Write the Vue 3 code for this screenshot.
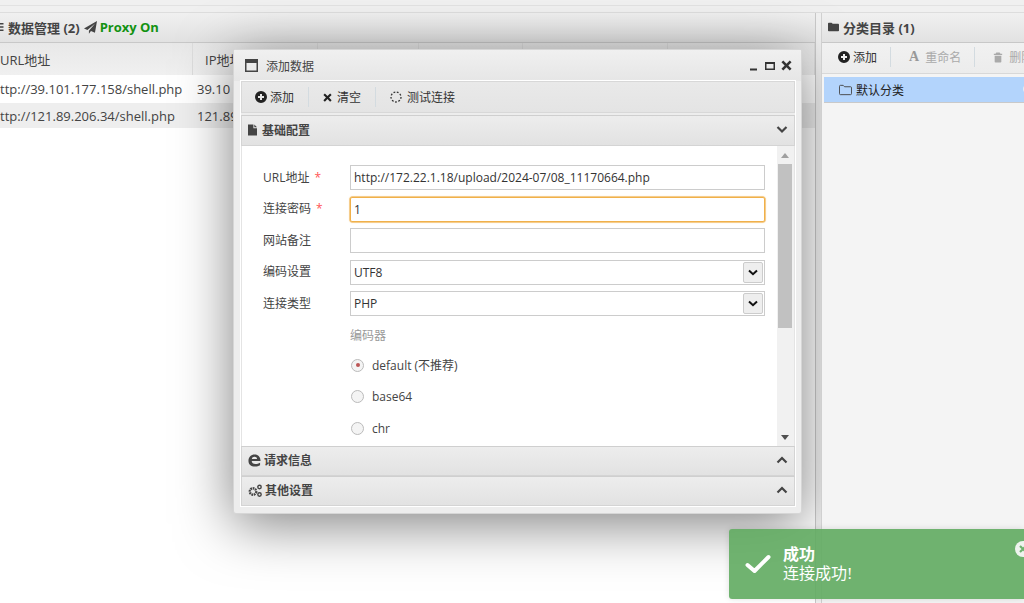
<script setup>
const columns = [
  { label: 'URL地址', w: 193 },
  { label: 'IP地址', w: 125 },
  { label: '', w: 101 },
  { label: '', w: 104 },
  { label: '', w: 145 },
  { label: '', w: 147 }
]
const rows = [
  ['ttp://39.101.177.158/shell.php', '39.10'],
  ['ttp://121.89.206.34/shell.php', '121.89']
]
const fields = [
  { label: 'URL地址', req: true, value: 'http://172.22.1.18/upload/2024-07/08_11170664.php' },
  { label: '连接密码', req: true, value: '1', focus: true },
  { label: '网站备注', value: '' }
]
const selects = [
  { label: '编码设置', value: 'UTF8' },
  { label: '连接类型', value: 'PHP' }
]
const radios = [
  { label: 'default (不推荐)', on: true },
  { label: 'base64' },
  { label: 'chr' }
]
</script>

<template>
  <div class="page">
    <div class="topbar"></div>
    <div class="panels">
      <section class="left">
        <header class="phead left-head">
          <svg class="dots" viewBox="0 0 4 10"><path d="M0 1h3.500v1.600H0zM0 4.200h3.500v1.600H0zM0 7.400h3.500V9H0z"/></svg>
          <span class="b">数据管理 (2)</span>
          <svg class="ic13" viewBox="0 0 14 14"><path d="M14 0 11.800 12.600 7.500 10.700 5.300 13.600V10.600L12 2.600 3.700 9.600 0 8z"/></svg>
          <span class="proxy">Proxy On</span>
        </header>
        <div class="thead">
          <div v-for="(c, i) in columns" :key="i" class="th" :style="{ width: c.w + 'px' }">{{ c.label }}</div>
        </div>
        <div v-for="(r, i) in rows" :key="i" class="tr" :class="{ alt: i === 1 }">
          <div class="td first">{{ r[0] }}</div>
          <div class="td">{{ r[1] }}</div>
        </div>
      </section>

      <aside class="right">
        <header class="phead right-head">
          <svg class="fold" viewBox="0 0 14 12"><path d="M0 1.500C0 .8.500.5 1 .5h3.500L6 2h7c.6 0 1 .4 1 1v7.500c0 .6-.4 1-1 1H1c-.6 0-1-.4-1-1z"/></svg>
          <span class="b">分类目录 (1)</span>
        </header>
        <div class="rtool">
          <span class="tbtn">
            <svg class="ic12" viewBox="0 0 12 12"><path fill-rule="evenodd" d="M6 0a6 6 0 1 1 0 12A6 6 0 0 1 6 0zM5 3v2H3v2h2v2h2V7h2V5H7V3z"/></svg>
            添加
          </span>
          <i class="sep"></i>
          <span class="tbtn off"><b class="a-ic">A</b> 重命名</span>
          <i class="sep"></i>
          <span class="tbtn off">
            <svg class="trash" viewBox="0 0 12 12"><path d="M4 0h4l1 1.500h2V3H1V1.500h2zM2 4h8v7c0 .6-.4 1-1 1H3c-.6 0-1-.4-1-1z"/></svg>
            删除
          </span>
        </div>
        <div class="cat">
          <svg class="folder" viewBox="0 0 14 12"><path fill="none" stroke="#444" stroke-width="1" d="M.5 2c0-.6.4-1 1-1h3l1.500 1.500h6.500c.6 0 1 .4 1 1v6.500c0 .6-.4 1-1 1h-11c-.6 0-1-.4-1-1z"/></svg>
          默认分类
          <i class="badge"></i>
        </div>
      </aside>
    </div>

    <div class="dialog">
      <header class="dhead">
        <svg class="winic" viewBox="0 0 13 13"><path fill-rule="evenodd" d="M0 0h13v13H0zM1.500 4v7.500h10V4z"/></svg>
        <span class="dtitle">添加数据</span>
        <span class="winbtns">
          <svg viewBox="0 0 10 10" class="wb"><path d="M1 7.500h7v2H1z"/></svg>
          <svg viewBox="0 0 10 10" class="wb"><path fill-rule="evenodd" d="M0 1h10v8H0zM1.500 3v4.500h7V3z"/></svg>
          <svg viewBox="0 0 12 12" class="wb x"><path d="M2.500.5 6 4 9.500.5l2 2L8 6l3.500 3.500-2 2L6 8l-3.500 3.500-2-2L4 6 .5 2.500z"/></svg>
        </span>
      </header>
      <div class="inner">
        <div class="dtool">
          <span class="tbtn">
            <svg class="ic12" viewBox="0 0 12 12"><path fill-rule="evenodd" d="M6 0a6 6 0 1 1 0 12A6 6 0 0 1 6 0zM5 3v2H3v2h2v2h2V7h2V5H7V3z"/></svg>
            添加
          </span>
          <i class="sep"></i>
          <span class="tbtn wide">
            <svg class="ic9" viewBox="0 0 12 12"><path d="M2.500.5 6 4 9.500.5l2 2L8 6l3.500 3.500-2 2L6 8l-3.500 3.500-2-2L4 6 .5 2.500z"/></svg>
            清空
          </span>
          <i class="sep"></i>
          <span class="tbtn wide">
            <svg class="ic12 spin" viewBox="0 0 12 12"><circle cx="6" cy="6" r="5" fill="none" stroke="#333" stroke-width="1.300" stroke-dasharray="1.800 1.600"/></svg>
            测试连接
          </span>
        </div>
        <div class="acc first-acc">
          <svg class="doc" viewBox="0 0 10 12"><path d="M0 0h6v4h4v8H0zM7 0l3 3H7zM2 6h6v1H2zM2 8h6v1H2z"/></svg>
          <span class="b">基础配置</span>
          <svg class="chev" viewBox="0 0 12 8"><path d="M1.500 1 6 5.500 10.500 1" fill="none" stroke="#444" stroke-width="2.200"/></svg>
        </div>
        <div class="body">
          <div class="form">
            <div v-for="f in fields" :key="f.label" class="row">
              <label class="lab">{{ f.label }}<em v-if="f.req">*</em></label>
              <div class="inp" :class="{ focus: f.focus }">{{ f.value }}</div>
            </div>
            <div v-for="s in selects" :key="s.label" class="row">
              <label class="lab">{{ s.label }}</label>
              <div class="inp sel">
                {{ s.value }}
                <span class="arrow">
                  <svg viewBox="0 0 10 7"><path d="M1 1.500 5 5.200 9 1.500" fill="none" stroke="#111" stroke-width="2"/></svg>
                </span>
              </div>
            </div>
            <div class="group">编码器</div>
            <div v-for="r in radios" :key="r.label" class="radio">
              <span class="dot" :class="{ on: r.on }"></span>
              {{ r.label }}
            </div>
          </div>
          <div class="scroll">
            <span class="tri up"></span>
            <span class="thumb"></span>
            <span class="tri down"></span>
          </div>
        </div>
        <div class="acc tight">
          <svg class="ic13" viewBox="0 0 14 13"><path fill-rule="evenodd" d="M7.200 0C11 0 13.500 2.600 13.500 7H4c.1 2 1.600 3.300 4 3.300 1.800 0 3.500-.6 5-1.500v2.800c-1.500.9-3.300 1.400-5.300 1.400C3 13 .5 10.500.5 6.700.5 2.800 3.200 0 7.200 0zM4.100 4.800h5.700C9.600 3.400 8.600 2.500 7 2.500c-1.500 0-2.600.9-2.900 2.300z"/></svg>
          <span class="b">请求信息</span>
          <svg class="chev" viewBox="0 0 12 8"><path d="M1.500 6.500 6 2l4.500 4.500" fill="none" stroke="#444" stroke-width="2.200"/></svg>
        </div>
        <div class="acc tight">
          <svg class="gear" viewBox="0 0 14 13"><circle cx="5" cy="7.500" r="3.200" fill="none" stroke="#444" stroke-width="2.400" stroke-dasharray="1.700 .7"/><circle cx="11.500" cy="3" r="1.700" fill="none" stroke="#444" stroke-width="1.400"/><circle cx="11.500" cy="10.500" r="1.700" fill="none" stroke="#444" stroke-width="1.400"/></svg>
          <span class="b">其他设置</span>
          <svg class="chev" viewBox="0 0 12 8"><path d="M1.500 6.500 6 2l4.500 4.500" fill="none" stroke="#444" stroke-width="2.200"/></svg>
        </div>
      </div>
    </div>

    <div class="toast">
      <svg class="check" viewBox="0 0 26 20"><path d="M2.500 11 9.500 17 23.500 3" fill="none" stroke="#fff" stroke-width="4" stroke-linecap="round" stroke-linejoin="round"/></svg>
      <div class="tmsg">
        <strong>成功</strong>
        <span>连接成功!</span>
      </div>
      <svg class="tclose" viewBox="0 0 16 16"><circle cx="8" cy="8" r="8" fill="#eef3ee"/><path d="M5 5l6 6M11 5l-6 6" stroke="#6fb26f" stroke-width="2.200"/></svg>
    </div>
  </div>
</template>

<style>
html, body { margin: 0; overflow: hidden; }
</style>

<style scoped>
.page {
  position: relative;
  width: 1024px;
  height: 603px;
  overflow: hidden;
  background: #f1f1f1;
  font: 12px "Open Sans", "Noto Sans CJK SC", sans-serif;
  color: #444;
}
.topbar { height: 13px; box-sizing: border-box; background: #f0f0f0; border-bottom: 1px solid #ddd; box-shadow: inset 0 -6px 0 #f0f0f0, inset 0 -7px 0 #e2e2e2; }
.panels { display: flex; height: 590px; gap: 5px; }
.left { width: 816px; background: #fff; border-right: 1px solid #c9c9c9; box-sizing: border-box; }
.right { flex: 1; min-width: 0; background: #f4f4f4; border-left: 1px solid #d0d0d0; position: relative; z-index: 2; }
.phead {
  height: 30px;
  display: flex;
  align-items: center;
  gap: 3px;
  box-sizing: border-box;
  padding-bottom: 1px;
  background: linear-gradient(#f0f0f0, #e2e2e2);
  border-bottom: 1px solid #c8c8c8;
  font-size: 13px;
  color: #444;
}
.right-head { padding-left: 6px; gap: 4px; }
.b { font-weight: 700; }
.proxy { color: #129212; font-weight: 700; }
svg { fill: #444; flex: none; }
.ic13 { width: 13px; height: 13px; }
.gear { width: 14px; height: 13px; }
.dots { width: 4px; height: 10px; margin-right: 1px; }
.left-head .ic13 { margin-left: 1px; }
.fold { width: 11px; height: 10px; }
.ic12 { width: 12px; height: 12px; fill: #222; }
.ic9 { width: 9px; height: 9px; fill: #222; }
.trash { width: 10px; height: 11px; }
.doc { width: 9px; height: 12px; }
.thead { display: flex; height: 32px; background: linear-gradient(#e8e8e8, #f0f0f0); }
.th { box-sizing: border-box; padding: 7px 0 0 12px; font-size: 13px; border-right: 1px solid #ddd; }
.th:first-child { padding-left: 0; }
.tr { display: flex; height: 28px; align-items: center; font-size: 13px; background: #fff; }
.tr.alt { background: #eee; height: 25px; }
.td { padding-left: 4px; }
.td.first { width: 193px; box-sizing: border-box; padding-left: 0; }
.rtool { display: flex; align-items: center; height: 31px; padding: 0 0 2px 16px; gap: 13px; background: linear-gradient(#f1f1f1, #ececec); border-bottom: 1px solid #d8d8d8; box-sizing: border-box; overflow: hidden; }
.dtool { display: flex; align-items: center; height: 32px; padding-left: 13px; gap: 14px; background: linear-gradient(#e9e9e9, #e4e4e4); border: 1px solid #d8d8d8; box-sizing: border-box; }
.tbtn { display: inline-flex; flex: none; white-space: nowrap; align-items: center; gap: 3px; font-size: 12px; color: #333; }
.tbtn.wide { gap: 5px; }
.tbtn.off { color: #aaa; gap: 6px; margin-left: 5px; }
.tbtn.off svg { fill: #aaa; }
.a-ic { font: 700 14px "Liberation Serif", serif; color: #999; }
.sep { width: 1px; height: 20px; flex: none; background: #d3dbe0; }
.cat { margin: 3px 0 0 2px; height: 26px; display: flex; align-items: center; padding-left: 15px; gap: 4px; background: #b3d4fc; border-bottom: 1px solid #c9c9c9; box-sizing: border-box; color: #222; position: relative; overflow: hidden; }
.folder { width: 13px; height: 12px; }
.badge { position: absolute; right: -11px; top: 7px; width: 12px; height: 10px; border-radius: 6px; background: #e8eef5; }

.dialog {
  position: absolute;
  z-index: 1;
  left: 233px;
  top: 49px;
  width: 569px;
  height: 465px;
  box-sizing: border-box;
  background: #ededed;
  border: 1px solid #d6d6d6;
  border-radius: 3px;
  box-shadow: 0 10px 55px rgba(0, 0, 0, .5);
  display: flex;
  flex-direction: column;
}
.dhead { height: 31px; flex: none; display: flex; align-items: center; padding: 0 9px 0 11px; gap: 8px; background: linear-gradient(#f0f0f0, #e6e6e6); }
.winic { width: 13px; height: 13px; fill: #444; }
.dtitle { font-size: 12px; font-weight: 400; color: #444; flex: 1; }
.winbtns { display: flex; align-items: center; gap: 6px; }
.wb { width: 10px; height: 10px; fill: #333; }
.wb.x { width: 11px; height: 11px; }
.inner { margin: 0 6px 0 7px; display: flex; flex-direction: column; box-shadow: 0 0 0 1px #fff; }
.acc { height: 30px; flex: none; display: flex; align-items: center; gap: 5px; padding: 0 6px 2px 6px; box-sizing: border-box; background: linear-gradient(#ededed, #e2e2e2); border: 1px solid #d4d4d4; border-top-color: #cfcfcf; color: #444; }
.acc.tight { gap: 3px; }
.acc .ic13 { fill: #444; }
.acc .doc { fill: #444; }
.acc .b { flex: 1; }
.chev { width: 12px; height: 8px; }
.first-acc { margin-top: 2px; height: 31px; }
.body { height: 300px; flex: none; display: flex; background: #fff; border: 1px solid #e4e4e4; border-width: 0 1px; box-sizing: border-box; overflow: hidden; }
.form { flex: 1; padding-top: 19px; }
.row { display: flex; align-items: center; height: 25px; margin-bottom: 6.500px; }
.lab { width: 87px; margin-left: 21px; padding-bottom: 2px; font-size: 12px; color: #444; flex: none; }
.lab em { color: #f55; font-style: normal; margin-left: 5px; }
.inp { width: 415px; height: 25px; box-sizing: border-box; border: 1px solid #ccc; padding: 0 3px; font-size: 12px; line-height: 23px; color: #333; position: relative; }
.inp.focus { border-color: #f0b04a; box-shadow: 0 0 0 .5px #f0b04a, 0 0 2px #f0b04a; border-radius: 2px; }
.sel { background: #fff; }
.arrow { position: absolute; right: 1px; top: 1px; width: 20px; height: 21px; background: #eee; border: 1px solid #ccc; border-radius: 2px; box-sizing: border-box; display: flex; align-items: center; justify-content: center; }
.arrow svg { width: 10px; height: 7px; }
.group { margin: 12px 0 0 108px; color: #999; font-size: 12px; line-height: 16px; }
.radio { margin: 0 0 0 109px; display: flex; align-items: center; gap: 8px; height: 31.500px; font-size: 12px; color: #444; position: relative; top: 5.500px; }
.dot { width: 13px; height: 13px; border-radius: 50%; border: 1px solid #bbb; box-sizing: border-box; background: #f4f4f4; display: inline-block; position: relative; }
.dot.on::after { content: ""; position: absolute; left: 3.500px; top: 3.500px; width: 4px; height: 4px; background: #b55; border-radius: 50%; }
.scroll { width: 17px; flex: none; background: #f1f1f1; display: flex; flex-direction: column; align-items: center; position: relative; }
.thumb { width: 14px; height: 164px; background: #c1c1c1; position: absolute; top: 18px; left: 1px; }
.tri { position: absolute; width: 0; height: 0; border-left: 4px solid transparent; border-right: 4px solid transparent; left: 4px; }
.tri.up { top: 7px; border-bottom: 5px solid #a0a0a0; }
.tri.down { bottom: 6px; border-top: 5px solid #505050; }

.toast {
  position: absolute;
  z-index: 3;
  left: 729px;
  top: 529px;
  width: 295px;
  height: 70px;
  border-radius: 3px 0 0 3px;
  background: rgba(96, 171, 96, .9);
  box-shadow: 0 0 6px rgba(0,0,0,.12);
  display: flex;
  align-items: center;
  color: #fff;
}
.check { width: 26px; height: 20px; margin: 0 12px 0 16px; }
.tmsg { display: flex; flex-direction: column; font: 16px/19px "Liberation Serif", "Noto Sans CJK SC", serif; }
.tmsg strong { font-weight: 700; }
.tclose { position: absolute; right: -7px; top: 12px; width: 16px; height: 16px; }
</style>
